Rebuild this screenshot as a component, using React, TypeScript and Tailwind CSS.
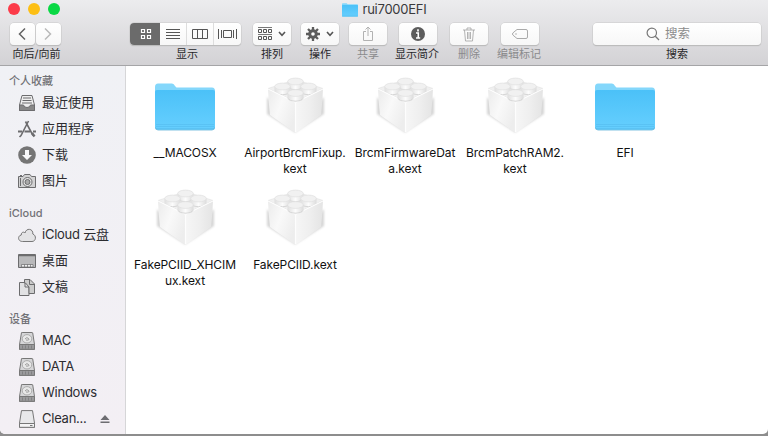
import type { ReactNode } from "react";

const stroke = { fill: "none", stroke: "#6c6c6e", strokeWidth: 1 };

function Folder({ className }: { className: string }) {
  return (
    <svg viewBox="0 0 60 48" className={className} preserveAspectRatio="none">
      <defs>
        <linearGradient id="folder" x1="0" y1="0" x2="0" y2="1">
          <stop offset="0" stopColor="#4bc1f8" />
          <stop offset="1" stopColor="#66cffe" />
        </linearGradient>
      </defs>
      <path d="M0 4Q0 .5 3 .5H17Q19 .5 20 3L21.500 4.500H57Q60 4.500 60 8V20H0Z" fill="#84d7fb" />
      <path d="M0 8.500Q0 7 2 7H58Q60 7 60 8.500V44.500Q60 47 57 47H3Q0 47 0 44.500Z" fill="url(#folder)" />
      <path d="M1 41.500H59M1 43.500H59M1 45.500H59" stroke="#50b8ea" strokeWidth=".7" opacity=".7" />
      <path d="M.5 44.500Q1 47 3 47H57Q59 47 59.500 44.500" fill="none" stroke="#64b5da" strokeWidth=".8" />
    </svg>
  );
}

function Stud({ x, y }: { x: number; y: number }) {
  return (
    <g transform={`translate(${x} ${y})`}>
      <path d="M-8 0V4.500C-8 9.500 8 9.500 8 4.500V0Z" fill="url(#stud)" />
      <path d="M-7.500 5.500C-6 9 6 9 7.500 5.500" fill="none" stroke="#cfcfcf" strokeWidth=".8" />
      <ellipse cx="0" cy="0" rx="7.800" ry="3.400" fill="#f1f1f1" stroke="#e0e0e0" strokeWidth=".7" />
    </g>
  );
}

function Brick() {
  return (
    <svg viewBox="0 0 64 64" className="h-16 w-16 shrink-0">
      <defs>
        <linearGradient id="left" x1="0" y1="0" x2="1" y2=".6">
          <stop offset="0" stopColor="#ebebeb" />
          <stop offset=".5" stopColor="#f9f9f9" />
          <stop offset="1" stopColor="#ededed" />
        </linearGradient>
        <linearGradient id="right" x1="0" y1="0" x2="1" y2="0">
          <stop offset="0" stopColor="#f6f6f6" />
          <stop offset=".5" stopColor="#efefef" />
          <stop offset="1" stopColor="#e4e4e4" />
        </linearGradient>
        <linearGradient id="stud" x1="0" y1="0" x2="1" y2="0">
          <stop offset="0" stopColor="#dfdfdf" />
          <stop offset=".5" stopColor="#fcfcfc" />
          <stop offset="1" stopColor="#dcdcdc" />
        </linearGradient>
        <filter id="soft" x="-20%" y="-20%" width="140%" height="140%">
          <feGaussianBlur stdDeviation="1.300" />
        </filter>
      </defs>
      <path d="M4 24L32 56L61 24V41L32 59.500L4 41Z" fill="#bbb" opacity=".6" filter="url(#soft)" />
      <path d="M5 15.500L28 8H37L60 15.500L32.500 29Z" fill="#f0f0f0" stroke="#e0e0e0" strokeWidth=".6" />
      <Stud x={32.500} y={8.500} />
      <Stud x={19.500} y={13.500} />
      <Stud x={45.500} y={13.500} />
      <path d="M5 15.500L32.500 29V60L7 42Q5.500 30 5 15.500Z" fill="url(#left)" />
      <path d="M60 15.500L32.500 29V60L58 42Q59.500 30 60 15.500Z" fill="url(#right)" />
      <path d="M5 16L32.500 29.500L60 16" fill="none" stroke="#fff" strokeWidth="1" />
      <path d="M32.500 30V59" stroke="#fdfdfd" strokeWidth="1.200" />
      <Stud x={32.500} y={20} />
    </svg>
  );
}

function Side({ kind }: { kind: string }) {
  return (
    <svg viewBox="0 0 18 18" className="h-[18px] w-[18px] shrink-0">
      {kind === "recent" && (
        <g {...stroke}>
          <path d="M4 1.500H14L16.500 11V16.500H1.500V11Z" fill="#eee" />
          <path d="M1.500 11H5.500Q6 13.500 9 13.500T12.500 11H16.500V16.500H1.500Z" fill="#888" />
          <path d="M5 4H13M4.500 6.500H13.500M4 9H14" />
        </g>
      )}
      {kind === "apps" && (
        <g {...stroke} strokeWidth="1.600">
          <path d="M10.500 1L3 15.500L1.500 17M7.500 1.500L15 15.500" />
          <path d="M0 11.500H4M6.500 11.500H12M15 11.500H18" strokeWidth="1.800" />
          <path d="M14 13L16.500 16.500" strokeWidth="2.400" />
        </g>
      )}
      {kind === "down" && (
        <g>
          <circle cx="9" cy="9" r="8.800" fill="#757575" />
          <path d="M7 4H11V9H14L9 14L4 9H7Z" fill="#f7f7f9" />
        </g>
      )}
      {kind === "photo" && (
        <g {...stroke}>
          <path d="M.5 4.500H5L6.500 2.500H12L13.500 4.500H17.500V15.500H.5Z" fill="#d2d2d3" />
          <circle cx="9.500" cy="10" r="4.500" fill="#e6e6e6" />
          <circle cx="9.500" cy="10" r="2.500" fill="#aaa" />
          <path d="M2 3.500H4M2.500 6V14" />
        </g>
      )}
      {kind === "cloud" && (
        <path d="M4.500 15.500C-.5 15.500-.5 9.500 3.300 9C3 6 6 5.500 7 7C8 1.500 15.500 2.500 14.800 8C18.800 9.500 18 15.500 14 15.500Z" fill="#e3e3e5" stroke="#777" />
      )}
      {kind === "desk" && (
        <g {...stroke}>
          <path d="M.5 2.500H17.500V15.500H.5Z" fill="#b9b9bb" />
          <path d="M1 3.500H17" strokeWidth="1.500" />
          <path d="M3.500 12.500H15V15H3.500ZM6.500 12.500V15M9.500 12.500V15M12.500 12.500V15" fill="#eee" strokeWidth=".7" />
        </g>
      )}
      {kind === "docs" && (
        <g {...stroke}>
          <path d="M1.500 4.500H8L11 7.500V17.500H1.500Z" fill="#e1e1e3" />
          <path d="M6.500 1.500H12L16.500 6V15.500H11V9L7.500 5H6.500Z" fill="#ccc" />
          <path d="M11.500 1.500V6.500H16.500M7 5V9H11" />
        </g>
      )}
      {kind === "disk" && (
        <g {...stroke} stroke="#777">
          <path d="M3.500 .6Q4 .5 5 .5H13Q14.500 .5 14.700 .8L16.500 12.500V17.300H1.500V12.500Z" fill="#d6d6d8" />
          <path d="M1.500 12.500H16.500V17.300H1.500Z" fill="#9a9a9c" />
          <ellipse cx="9" cy="6.800" rx="4.800" ry="4.200" fill="#e8e8e8" stroke="#aaa" />
          <path d="M7 7Q9 4.500 10.500 6.500T8 8M4.500 13.500V16.500M7.500 13.500V16.500M10.500 13.500V16.500M13.500 13.500V16.500" strokeWidth=".7" />
        </g>
      )}
      {kind === "removable" && (
        <g {...stroke} stroke="#777">
          <path d="M3.500 .6H14.500L16.500 13V17.300H1.500V13Z" fill="#e8e8ea" />
          <path d="M1.500 13.500H16.500V17.300H1.500Z" fill="#f4f4f5" />
          <path d="M12 15.500H14.500" />
        </g>
      )}
    </svg>
  );
}

function SideGroup({ title, rows, top }: { title: string; rows: [string, string][]; top: string }) {
  return (
    <section className={top}>
      <h2 className="flex h-[18px] items-center pl-[9px] text-[11px] font-medium text-[#717176]">{title}</h2>
      <div>
        {rows.map(([kind, name]) => (
          <div key={name} className="flex h-[26px] items-center gap-[6px] pr-[15px] pl-[18px] text-[13px] text-[#2c2c30]">
            <Side kind={kind} />
            <span className={`whitespace-nowrap ${/[A-Z]/.test(name) ? "tracking-[-0.25px]" : ""}`}>{name}</span>
            {kind === "removable" && (
              <svg viewBox="0 0 10 10" className="ml-auto h-[10px] w-[10px]">
                <path d="M5 1L9.500 6H.5ZM.5 7.500H9.500V9H.5Z" fill="#6d6d71" />
              </svg>
            )}
          </div>
        ))}
      </div>
    </section>
  );
}

const button = "flex h-[22px] items-center justify-center rounded-[4px] bg-gradient-to-b from-white to-[#f7f7f7] shadow-[0_0_0_0.5px_#c9c9c9,0_1px_1px_#aaa]";

function Tool({ label, children, className, dim, shift }: { label: string; children: ReactNode; className: string; dim?: boolean; shift?: boolean }) {
  return (
    <div className={`flex shrink-0 flex-col items-center ${className}`}>
      {children}
      <span className={`mt-px flex h-4 items-center text-[11px] whitespace-nowrap ${shift ? "pl-[3px]" : ""} ${dim ? "text-[#8a8a8c]" : "text-[#27272a]"}`}>{label}</span>
    </div>
  );
}

function Chevron() {
  return (
    <svg viewBox="0 0 8 6" className="h-[6px] w-2">
      <path d="M1 1L4 4.300L7 1" fill="none" stroke="#555" strokeWidth="1.600" />
    </svg>
  );
}

function Toolbar() {
  return (
    <div className="flex items-start">
      <Tool label="向后/向前" shift className="ml-[9px] w-[52px]">
        <div className="flex gap-px">
          <div className={`${button} w-[25px]`}>
            <svg viewBox="0 0 8 14" className="h-[14px] w-2"><path d="M7 1.500L1.500 7L7 12.500" fill="none" stroke="#626262" strokeWidth="1.500" /></svg>
          </div>
          <div className={`${button} w-[25px]`}>
            <svg viewBox="0 0 8 14" className="h-[14px] w-2"><path d="M1 1.500L6.500 7L1 12.500" fill="none" stroke="#b9b9b9" strokeWidth="1.500" /></svg>
          </div>
        </div>
      </Tool>
      <Tool label="显示" shift className="ml-[69px] w-[111px]">
        <div className={`${button} w-full overflow-hidden`}>
          <div className="flex h-full w-[30px] items-center justify-center bg-[#6b6b6b]">
            <svg viewBox="0 0 12 12" className="ml-px h-3 w-3"><path d="M1.500 1.500H4.500V4.500H1.500ZM7.500 1.500H10.500V4.500H7.500ZM1.500 7.500H4.500V10.500H1.500ZM7.500 7.500H10.500V10.500H7.500Z" fill="none" stroke="#fff" strokeWidth="1.200" /></svg>
          </div>
          <div className="flex h-full w-[27px] items-center justify-center border-r border-[#ddd]">
            <svg viewBox="0 0 14 12" className="h-3 w-[14px]"><path d="M0 1.500H14M0 4.500H14M0 7.500H14M0 10.500H14" stroke="#555" /></svg>
          </div>
          <div className="flex h-full w-[27px] items-center justify-center border-r border-[#ddd]">
            <svg viewBox="0 0 16 12" className="h-3 w-4"><path d="M.5 1.500H15.500V10.500H.5ZM5.500 1.500V10.500M10.500 1.500V10.500" fill="none" stroke="#555" /></svg>
          </div>
          <div className="flex h-full w-[27px] items-center justify-center">
            <svg viewBox="0 0 19 12" className="h-3 w-[19px]"><path d="M.5 1V11M3.500 2V10M5.500 2.500H13.500V9.500H5.500ZM15.500 2V10M18.500 1V11" fill="none" stroke="#555" /></svg>
          </div>
        </div>
      </Tool>
      <Tool label="排列" className="ml-3 w-[38px]">
        <div className={`${button} w-full gap-[6px]`}>
          <svg viewBox="0 0 14 14" className="h-[14px] w-[14px]">
            <path d="M0 .5H14M0 7.500H14" stroke="#777" />
            <path d="M.5 2.500H3.500V5.500H.5ZM5.500 2.500H8.500V5.500H5.500ZM10.500 2.500H13.500V5.500H10.500ZM.5 9.500H3.500V12.500H.5ZM5.500 9.500H8.500V12.500H5.500ZM10.500 9.500H13.500V12.500H10.500Z" fill="none" stroke="#555" />
          </svg>
          <Chevron />
        </div>
      </Tool>
      <Tool label="操作" className="ml-[10px] w-[38px]">
        <div className={`${button} w-full gap-[6px]`}>
          <svg viewBox="0 0 14 14" className="h-[14px] w-[14px]">
            <path d="M7 0V14M0 7H14M2 2L12 12M2 12L12 2" stroke="#5d5d5d" strokeWidth="2.300" />
            <circle cx="7" cy="7" r="3.300" fill="#fff" stroke="#5d5d5d" strokeWidth="3" />
          </svg>
          <Chevron />
        </div>
      </Tool>
      <Tool label="共享" dim className="ml-[10px] w-[38px]">
        <div className={`${button} w-full`}>
          <svg viewBox="0 0 12 16" className="h-4 w-3"><path d="M4 5.500H1.500V14.500H10.500V5.500H8M6 10V1M3.500 3.500L6 1L8.500 3.500" fill="none" stroke="#b2b2b2" /></svg>
        </div>
      </Tool>
      <Tool label="显示简介" className="ml-[8px] w-[44px]">
        <div className={`${button} ml-[2px] w-[38px]`}>
          <svg viewBox="0 0 14 14" className="h-[14px] w-[14px]">
            <circle cx="7" cy="7" r="7" fill="#5c5c5c" />
            <path d="M7 2.300V4.500M5 6H7.200V11M5 11H9.200" stroke="#fff" strokeWidth="1.700" />
          </svg>
        </div>
      </Tool>
      <Tool label="删除" dim className="ml-[11px] w-[38px]">
        <div className={`${button} w-full`}>
          <svg viewBox="0 0 12 15" className="h-[15px] w-3"><path d="M0 3H12M4 3V1H8V3M1.500 3L2.500 14H9.500L10.500 3M4.500 5V12M6 5V12M7.500 5V12" fill="none" stroke="#aaa" strokeWidth=".9" /></svg>
        </div>
      </Tool>
      <Tool label="编辑标记" dim className="ml-[9px] w-[44px]">
        <div className={`${button} ml-[2px] w-[38px]`}>
          <svg viewBox="0 0 16 10" className="h-[10px] w-4"><path d="M5 .5H14Q15.500 .5 15.500 2V8Q15.500 9.500 14 9.500H5L.8 6Q.3 5 .8 4Z" fill="none" stroke="#aaa" /><circle cx="4" cy="5" r=".8" fill="#aaa" /></svg>
        </div>
      </Tool>
      <Tool label="搜索" className="ml-[52px] w-[168px]">
        <div className={`${button} w-full gap-[5px] pr-[18px] text-[12.5px] text-[#8c8c8c]`}>
          <svg viewBox="0 0 14 14" className="h-[14px] w-[14px]"><circle cx="5.800" cy="5.800" r="4.700" fill="none" stroke="#777" strokeWidth="1.200" /><path d="M9.300 9.300L13 13" stroke="#777" strokeWidth="1.300" /></svg>
          <span>搜索</span>
        </div>
      </Tool>
    </div>
  );
}

const files = [
  { type: "folder", lines: ["__MACOSX"] },
  { type: "kext", lines: ["AirportBrcmFixup.", "kext"] },
  { type: "kext", lines: ["BrcmFirmwareDat", "a.kext"] },
  { type: "kext", lines: ["BrcmPatchRAM2.", "kext"] },
  { type: "folder", lines: ["EFI"] },
  { type: "kext", lines: ["FakePCIID_XHCIM", "ux.kext"] },
  { type: "kext", lines: ["FakePCIID.kext"] },
];

export default function App() {
  return (
    <div className="flex h-[436px] w-[768px] flex-col overflow-hidden bg-[#8d8d8d] font-[Inter,'Noto_Sans_CJK_SC',sans-serif]">
      <div className="flex h-[434px] flex-col overflow-hidden rounded-b-[5px] bg-white">
        <header className="h-[66px] shrink-0 border-b border-[#a5a5a7] bg-gradient-to-b from-[#ececee] to-[#d3d2d5]">
          <div className="grid h-[23px] grid-cols-[1fr_auto_1fr] items-start">
            <div className="flex gap-2 pt-[3px] pl-2">
              <span className="h-3 w-3 rounded-full bg-[#fc3b49]" />
              <span className="h-3 w-3 rounded-full bg-[#fdbf14]" />
              <span className="h-3 w-3 rounded-full bg-[#09d844]" />
            </div>
            <div className="flex h-[19px] items-center gap-[5px]">
              <Folder className="h-[14px] w-4" />
              <h1 className="text-[13px] tracking-[-0.25px] text-[#39393c]">rui7000EFI</h1>
            </div>
          </div>
          <Toolbar />
        </header>
        <div className="flex min-h-0 flex-1">
          <aside className="w-[126px] shrink-0 border-r border-[#d6d6d8] bg-gradient-to-b from-[#f0f1f5] to-[#f3eff4]">
            <SideGroup title="个人收藏" top="pt-[6px]" rows={[["recent", "最近使用"], ["apps", "应用程序"], ["down", "下载"], ["photo", "图片"]]} />
            <SideGroup title="iCloud" top="pt-[10px]" rows={[["cloud", "iCloud 云盘"], ["desk", "桌面"], ["docs", "文稿"]]} />
            <SideGroup title="设备" top="pt-[10px]" rows={[["disk", "MAC"], ["disk", "DATA"], ["disk", "Windows"], ["removable", "Clean..."]]} />
          </aside>
          <main className="grid flex-1 auto-rows-[112px] grid-cols-[repeat(5,110px)] content-start pt-[7px] pl-1">
            {files.map((file) => (
              <div key={file.lines[0]} className="flex flex-col items-center">
                <div className="flex h-[72px] items-start justify-center">
                  {file.type === "folder" ? <Folder className="mt-[10px] h-12 w-[60px]" /> : <Brick />}
                </div>
                <div className="text-center text-[12px] leading-4 tracking-[-0.1px] whitespace-nowrap text-[#111]">
                  {file.lines.map((line) => (
                    <div key={line}>{line}</div>
                  ))}
                </div>
              </div>
            ))}
          </main>
        </div>
      </div>
    </div>
  );
}
